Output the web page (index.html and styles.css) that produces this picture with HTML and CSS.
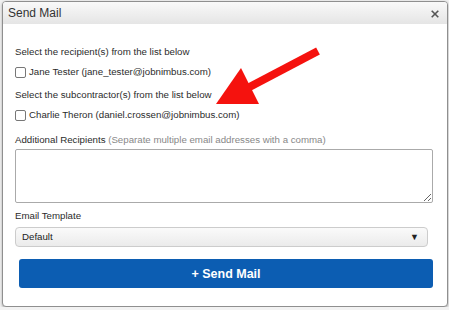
FILE: index.html
```html
<!DOCTYPE html>
<html lang="en">
<head>
  <meta charset="UTF-8">
  <title>Send Mail</title>
  <link rel="stylesheet" href="styles.css">
</head>
<body>
  <div class="dialog">
    <div class="dialog-header">
      <span class="dialog-title">Send Mail</span>
      <svg class="close" width="8" height="8" viewBox="0 0 8 8">
        <path d="M0.7 0.7 L7.3 7.3 M7.3 0.7 L0.7 7.3" stroke="#555" stroke-width="1.6"/>
      </svg>
    </div>
    <div class="dialog-body">
      <div class="label">Select the recipient(s) from the list below</div>
      <label class="check-row"><input type="checkbox"> Jane Tester (jane_tester@jobnimbus.com)</label>
      <div class="label gap-lg">Select the subcontractor(s) from the list below</div>
      <label class="check-row"><input type="checkbox"> Charlie Theron (daniel.crossen@jobnimbus.com)</label>
      <div class="label gap-xl">Additional Recipients <span class="hint">(Separate multiple email addresses with a comma)</span></div>
      <textarea class="recipients"></textarea>
      <div class="label gap-sm">Email Template</div>
      <div class="select">
        <span>Default</span>
        <span class="caret">&#9660;</span>
      </div>
      <button class="send-btn">+ Send Mail</button>
    </div>
    <svg class="arrow" width="449" height="310" viewBox="0 0 449 310">
      <line x1="318" y1="51" x2="240" y2="92" stroke="#f5120e" stroke-width="8"/>
      <polygon points="216,104 241,68 259,104" fill="#f5120e"/>
    </svg>
  </div>
</body>
</html>
```
FILE: styles.css
```css
body {
  margin: 0;
  background: #f2f2f2;
  font-family: "Liberation Sans", Arial, sans-serif;
  color: #2b2b2b;
}
.dialog {
  position: relative;
  margin: 1px 1px 0 2px;
  height: 304px;
  background: #fff;
  border: 1px solid #8f8f8f;
  border-radius: 4px;
  box-shadow: 0 1px 3px rgba(0, 0, 0, 0.3);
  overflow: hidden;
}
.dialog-header {
  display: flex;
  justify-content: space-between;
  align-items: center;
  height: 22px;
  padding: 0 8px 0 5px;
  background: linear-gradient(to bottom, #f9f9f9, #e5e5e5);
}
.dialog-title {
  font-size: 12px;
  color: #333;
}
.close {
  margin-top: 2px;
}
.dialog-body {
  display: flex;
  flex-direction: column;
  padding: 21px 14px 0 12px;
  font-size: 9.7px;
  line-height: 14px;
}
.label {
  height: 14px;
}
.gap-lg { margin-top: 9px; }
.gap-xl { margin-top: 11px; }
.gap-sm { margin-top: 6px; }
.hint {
  color: #888;
}
.check-row {
  display: flex;
  align-items: center;
  gap: 3px;
  height: 14px;
  margin-top: 6px;
}
.check-row input {
  appearance: none;
  margin: 0;
  width: 11px;
  height: 11px;
  border: 1px solid #777;
  border-radius: 2px;
  background: #fff;
}
.recipients {
  margin-top: 2px;
  height: 54px;
  box-sizing: border-box;
  border: 1px solid #aaa;
  border-radius: 2px;
  font-family: inherit;
}
.select {
  display: flex;
  justify-content: space-between;
  align-items: center;
  box-sizing: border-box;
  margin: 4px 5px 0 0;
  height: 20px;
  padding: 0 8px 0 6px;
  border: 1px solid #ccc;
  border-radius: 4px;
  background: linear-gradient(to bottom, #fafafa, #ebebeb);
  color: #222;
}
.caret {
  font-size: 9px;
}
.send-btn {
  margin: 12px 0 0 4px;
  height: 29px;
  border: none;
  border-radius: 3px;
  background: #0c5db2;
  color: #fff;
  font-family: inherit;
  font-size: 12.5px;
  font-weight: bold;
}
.arrow {
  position: absolute;
  left: -3px;
  top: -2px;
  pointer-events: none;
}
```
